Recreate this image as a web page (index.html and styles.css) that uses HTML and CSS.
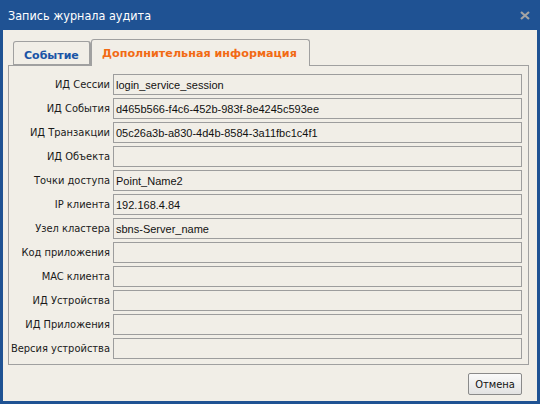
FILE: index.html
```html
<!DOCTYPE html>
<html lang="ru">
<head>
<meta charset="utf-8">
<link rel="stylesheet" href="styles.css">
</head>
<body>
<div class="window">
  <div class="titlebar">
    <span class="title">Запись журнала аудита</span>
    <svg class="close" width="10" height="9" viewBox="0 0 10 9"><path d="M1 1 L9 8 M9 1 L1 8" stroke="#a3a3a3" stroke-width="2.2" fill="none"/></svg>
  </div>
  <div class="client">
    <div class="tabs">
      <div class="tab tab-event">Событие</div>
      <div class="tab tab-active">Дополнительная информация</div>
    </div>
    <div class="panel">
      <div class="row"><span class="label">ИД Сессии</span><div class="field">login_service_session</div></div>
      <div class="row"><span class="label">ИД События</span><div class="field">d465b566-f4c6-452b-983f-8e4245c593ee</div></div>
      <div class="row"><span class="label">ИД Транзакции</span><div class="field">05c26a3b-a830-4d4b-8584-3a11fbc1c4f1</div></div>
      <div class="row"><span class="label">ИД Объекта</span><div class="field"></div></div>
      <div class="row"><span class="label">Точки доступа</span><div class="field">Point_Name2</div></div>
      <div class="row"><span class="label">IP клиента</span><div class="field">192.168.4.84</div></div>
      <div class="row"><span class="label">Узел кластера</span><div class="field">sbns-Server_name</div></div>
      <div class="row"><span class="label">Код приложения</span><div class="field"></div></div>
      <div class="row"><span class="label">MAC клиента</span><div class="field"></div></div>
      <div class="row"><span class="label">ИД Устройства</span><div class="field"></div></div>
      <div class="row"><span class="label">ИД Приложения</span><div class="field"></div></div>
      <div class="row"><span class="label">Версия устройства</span><div class="field"></div></div>
    </div>
    <div class="footer">
      <button class="btn">Отмена</button>
    </div>
  </div>
</div>
</body>
</html>
```
FILE: styles.css
```css
html, body {
  margin: 0;
  padding: 0;
}
body {
  width: 540px;
  height: 404px;
  background: #1f5293;
  font-family: "DejaVu Sans Condensed", "DejaVu Sans", sans-serif;
  font-stretch: condensed;
  font-size: 11px;
  color: #1a1a1a;
}
.window {
  width: 540px;
  height: 404px;
  display: flex;
  flex-direction: column;
}
.titlebar {
  height: 30px;
  flex: none;
  display: flex;
  align-items: center;
  justify-content: space-between;
  padding: 0 10px 0 8px;
}
.title {
  color: #ffffff;
  font-size: 12.5px;
  margin-top: 1px;
}
.close {
  display: block;
  margin-top: 1px;
}
.client {
  flex: 1;
  margin: 0 3px 3px 3px;
  background: #f1eee7;
  display: flex;
  flex-direction: column;
  padding: 9px 8px 0 5px;
}
.tabs {
  display: flex;
  align-items: flex-end;
  padding-left: 5px;
  height: 26px;
}
.tab {
  box-sizing: border-box;
  border: 1px solid #a0a0a0;
  border-bottom: none;
  border-radius: 3px 3px 0 0;
  font-weight: bold;
  font-family: "DejaVu Sans", sans-serif;
  font-stretch: normal;
  font-size: 11px;
  background: #f1eee7;
}
.tab-event {
  width: 78px;
  height: 24px;
  color: #1b55a6;
  padding: 7px 0 0 10px;
  border-bottom: 1px solid #a0a0a0;
  border-right-width: 2px;
}
.tab-active {
  position: relative;
  width: 219px;
  height: 27px;
  margin-bottom: -1px;
  color: #f26a14;
  padding: 7px 0 0 10px;
  font-size: 11.2px;
}
.panel {
  border: 1px solid #a0a0a0;
  padding: 8px 6px 5px 1px;
  display: flex;
  flex-direction: column;
  gap: 3px;
}
.row {
  display: flex;
  align-items: center;
  height: 21px;
}
.label {
  width: 100px;
  text-align: right;
  padding-right: 3px;
  white-space: nowrap;
}
.field {
  flex: 1;
  box-sizing: border-box;
  height: 21px;
  border: 1px solid #9d9d9d;
  padding: 3px 0 0 2px;
  white-space: nowrap;
  overflow: hidden;
  font-family: "Liberation Sans", Arial, sans-serif;
  font-stretch: normal;
  font-size: 11px;
  line-height: 14px;
  color: #111;
}
.footer {
  display: flex;
  justify-content: flex-end;
  padding: 8px 7px 0 0;
}
.btn {
  width: 54px;
  height: 22px;
  box-sizing: border-box;
  border: 1px solid #8a8a8a;
  border-radius: 2px;
  background: linear-gradient(#fafafa, #e2e2e2);
  font-family: "DejaVu Sans Condensed", "DejaVu Sans", sans-serif;
  font-stretch: condensed;
  font-size: 11px;
  color: #111;
  padding: 0;
}
```
